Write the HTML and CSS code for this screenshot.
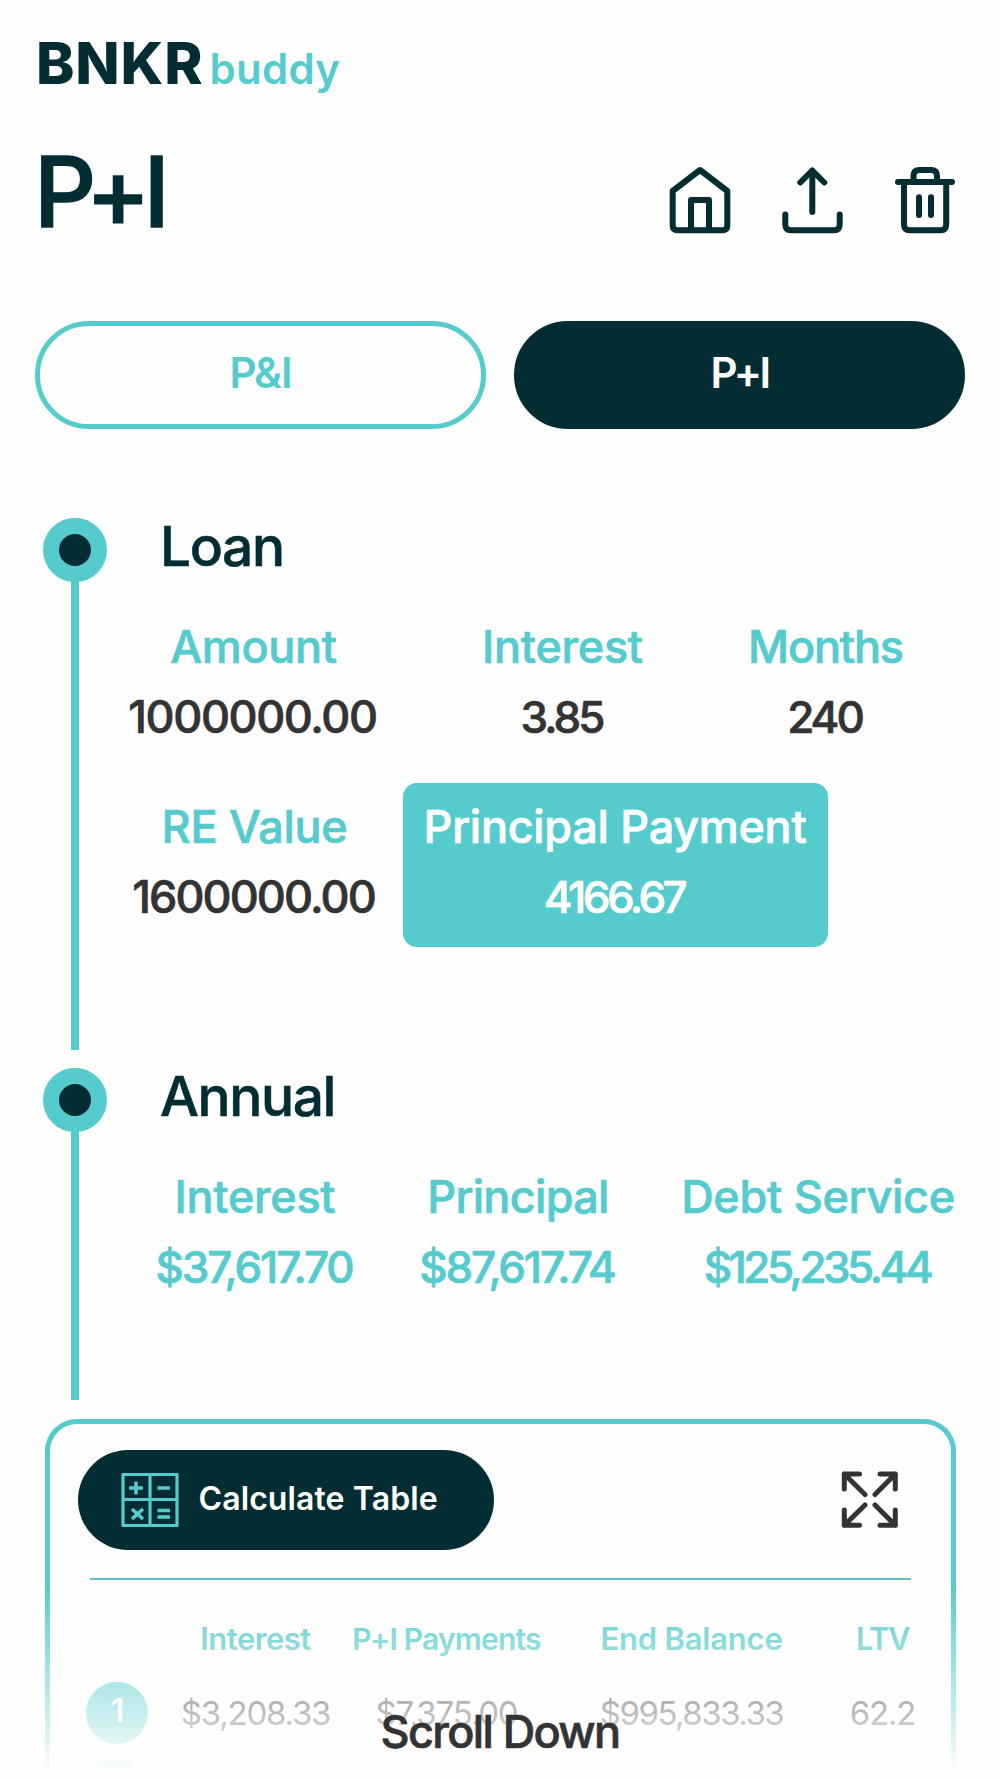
FILE: index.html
```html
<!DOCTYPE html>
<html>
<head>
<meta charset="utf-8">
<title>BNKR buddy</title>
<link rel="stylesheet" href="styles.css">
</head>
<body>
<div class="logo"><b>BNKR</b><span>buddy</span></div>

<div class="top">
  <h1>P+I</h1>
  <div class="icons">
    <svg width="70" height="70" viewBox="25 25 70 70">
      <path d="M32.7 51 L60 30 L87.3 51 V85.5 q0 4.8 -4.8 4.8 H37.5 q-4.8 0 -4.8 -4.8 Z"/>
      <path d="M51 90 V60 H69 V90"/>
    </svg>
    <svg width="70" height="70" viewBox="138 25 70 70">
      <path d="M172.3 72 V31"/>
      <path d="M160.3 42.5 L172.3 30.5 L184.3 42.5"/>
      <path d="M145.3 74.5 V84.5 q0 5.7 5.7 5.7 H194 q5.7 0 5.7 -5.7 V74.5"/>
    </svg>
    <svg width="70" height="70" viewBox="250 25 70 70">
      <path d="M258 42 H312"/>
      <path d="M264 42 V84.5 q0 5.7 5.7 5.7 H300.5 q5.7 0 5.7 -5.7 V42"/>
      <path d="M273.5 42 V36 q0 -6 6 -6 H291 q6 0 6 6 V42"/>
      <path d="M279 57.3 V75 M291 57.3 V75"/>
    </svg>
  </div>
</div>

<div class="tabs">
  <a class="tab">P&amp;I</a>
  <a class="tab on">P+I</a>
</div>

<div class="section loan">
  <div class="rail"><div class="dot"></div></div>
  <div class="content">
    <h2>Loan</h2>
    <div class="row row1">
      <div class="cell"><label>Amount</label><p class="n-long">1000000.00</p></div>
      <div class="cell"><label>Interest</label><p class="n-short">3.85</p></div>
      <div class="cell"><label class="months">Months</label><p class="n-short">240</p></div>
    </div>
    <div class="row row2">
      <div class="cell"><label>RE Value</label><p class="n-re">1600000.00</p></div>
      <div class="cell box"><label>Principal Payment</label><p class="n-tight">4166.67</p></div>
    </div>
  </div>
</div>

<div class="section annual">
  <div class="rail"><div class="dot"></div></div>
  <div class="content">
    <h2>Annual</h2>
    <div class="row row3">
      <div class="cell"><label>Interest</label><p class="n-money">$37,617.70</p></div>
      <div class="cell"><label class="princ">Principal</label><p class="n-money">$87,617.74</p></div>
      <div class="cell"><label>Debt Service</label><p class="n-tight">$125,235.44</p></div>
    </div>
  </div>
</div>

<div class="card">
  <div class="cardtop">
    <a class="calc">
      <svg width="58" height="54" viewBox="0 0 58 54">
        <path class="grid" d="M2 1.5 H56 V52.5 H2 Z M29 1.5 V52.5 M2 26.5 H56"/>
        <path class="sign" d="M8 15 H22 M15 8.5 V21.5 M36.5 15 H49 M11 36 L22 46 M22 36 L11 46 M36.5 37.5 H49 M36.5 44 H49"/>
      </svg>
      <span>Calculate Table</span>
    </a>
    <svg class="expand" width="58" height="58" viewBox="0 0 58 58">
      <path d="M3.3 18 V3 H18.5 M3.3 3 L24 23.5"/>
      <path d="M39 3 H54.3 V18 M54.3 3 L34 23.5"/>
      <path d="M3.3 39 V54.3 H18.5 M3.3 54.3 L24 34"/>
      <path d="M39 54.3 H54.3 V39 M54.3 54.3 L34 34"/>
    </svg>
  </div>
  <hr>
  <div class="table head">
    <span></span><span class="th-int">Interest</span><span class="th-pi">P+I Payments</span><span class="th-end">End Balance</span><span class="th-ltv">LTV</span>
  </div>
  <div class="table body">
    <span class="num">1</span><span>$3,208.33</span><span>$7,375.00</span><span class="end">$995,833.33</span><span>62.2</span>
  </div>
  <div class="table body">
    <span class="num"></span>
  </div>
</div>

<div class="fade"></div>
<div class="scroll">Scroll Down</div>
</body>
</html>
```
FILE: styles.css
```css
* { box-sizing: border-box; margin: 0; padding: 0; }
body {
position: relative; width: 1000px; height: 1778px; overflow: hidden;
background: #fefefe; color: #333; font-family: Inter, "Liberation Sans", sans-serif; }
svg { display: block; fill: none; stroke: #032d33; stroke-width: 6; stroke-linecap: round; stroke-linejoin: round; }
svg.expand { stroke: #333; stroke-width: 5; }

.logo { display: flex; align-items: baseline; height: 60px; margin: 33px 0 0 36px; line-height: 60px; }
.logo b { font-size: 58px; font-weight: 800; color: #032d33; letter-spacing: .8px; }
.logo span { margin-left: 6px; font-size: 42px; font-weight: 600; color: #55cbcd; letter-spacing: .3px; }

.top { display: flex; justify-content: space-between; margin: 58px 40px 0 34px; height: 81px; }
.top h1 { font-size: 97px; font-weight: 500; line-height: 82px; letter-spacing: -7px; color: #032d33; -webkit-text-stroke: 1.4px #032d33; }
.icons { display: flex; gap: 42.5px; margin-top: 14px; }

.tabs { display: grid; grid-template-columns: 451px 451px; gap: 28px; margin: 89px 0 0 35px; }
.tab {
height: 108px; padding-bottom: 7px; border: 5px solid #55cbcd; border-radius: 54px;
color: #55cbcd; font-size: 42px; font-weight: 600; line-height: 93px; letter-spacing: -1px; text-align: center; }
.tab.on { background: #032d33; border-color: #032d33; color: #fff; letter-spacing: -2.5px; }

.section { display: flex; margin-left: 43px; }
.loan { height: 532px; margin-top: 89px; }
.annual { height: 332px; margin-top: 18px; }
.rail { width: 64px; background: linear-gradient(#55cbcd, #55cbcd) center / 8px 100% no-repeat; }
.dot { width: 64px; height: 64px; border: 16px solid #55cbcd; border-radius: 50%; background: #032d33; }
h2 { margin-left: 53px; font-size: 55px; font-weight: 500; line-height: 57px; letter-spacing: -1.4px; color: #032d33; -webkit-text-stroke: .6px #032d33; }
.row { display: grid; }
.row1 { grid-template-columns: 294px 324px 202px; margin-top: 37px; }
.row2 { grid-template-columns: 296px 425px; margin-top: 31px; }
.row3 { grid-template-columns: 297px 229px 371px; margin-top: 37px; }
.cell { display: flex; flex-direction: column; align-items: center; white-space: nowrap; font-size: 45px; font-weight: 500; line-height: 70px; -webkit-text-stroke: .7px; }
.row2 .cell { height: 164px; padding-top: 9px; }
.cell label { padding-right: 1px; color: #55cbcd; letter-spacing: -.3px; }
.cell p { padding-right: 3px; }
.row3 p { color: #55cbcd; }
.cell.box { background: #55cbcd; border-radius: 14px; }
.cell.box label, .cell.box p { color: #fff; }
.cell .months { letter-spacing: -1.2px; }
.cell .princ { letter-spacing: -.7px; }
.n-long { letter-spacing: -1.4px; }
.n-re { letter-spacing: -1.9px; }
.n-short { font-size: 44px; letter-spacing: -3px; }
.n-money { font-size: 44px; letter-spacing: -2.2px; }
.n-tight { font-size: 44px; letter-spacing: -3.5px; }

.card { width: 911px; height: 358px; margin: 19px 0 0 44.5px; border: 5.5px solid #55cbcd; border-bottom: 0; border-radius: 32px 32px 0 0; }
.cardtop { display: flex; justify-content: space-between; align-items: center; margin: 26px 52px 0 28px; }
.calc { display: flex; align-items: center; width: 416px; height: 100px; padding-left: 43px; border-radius: 50px; background: #032d33; }
.calc span { margin-left: 20px; padding-bottom: 4px; font-size: 32px; font-weight: 600; letter-spacing: .1px; color: #fff; }
.calc .grid { stroke: #55cbcd; stroke-width: 3.2; }
.calc .sign { stroke: #55cbcd; stroke-width: 3.6; stroke-linecap: butt; }
hr { height: 2px; margin: 28px 40px 0; border: 0; background: #5bbfc2; }
.table { display: grid; grid-template-columns: 61px 216px 166px 324px 58px; justify-items: center; align-items: center; margin-left: 37px; white-space: nowrap; }
.head { height: 30px; margin-top: 40px; font-size: 31px; font-weight: 600; color: #55cbcd; }
.th-pi { font-size: 30px; letter-spacing: -.8px; }
.th-int { letter-spacing: -.5px; }
.th-end { letter-spacing: -.2px; }
.th-ltv { letter-spacing: -1.6px; }
.body { height: 62px; margin-top: 32px; font-size: 33px; letter-spacing: -1.2px; color: #333; }
.body + .body { margin-top: 15px; }
.end { letter-spacing: -1.5px; }
.num { width: 62px; height: 62px; border-radius: 50%; background: #55cbcd; color: #fff; font-weight: 600; line-height: 57px; text-align: center; }

/* bottom of the list fades out under the hint */
.fade { position: absolute; left: 0; right: 0; bottom: 0; height: 196px; background: linear-gradient(rgba(254,254,254,0), #fefefe 98%); }
.scroll { position: absolute; left: 0; right: 0; top: 1701px; line-height: 62px; font-size: 45px; font-weight: 500; letter-spacing: -1.6px; text-align: center; -webkit-text-stroke: .7px #333; }
```
